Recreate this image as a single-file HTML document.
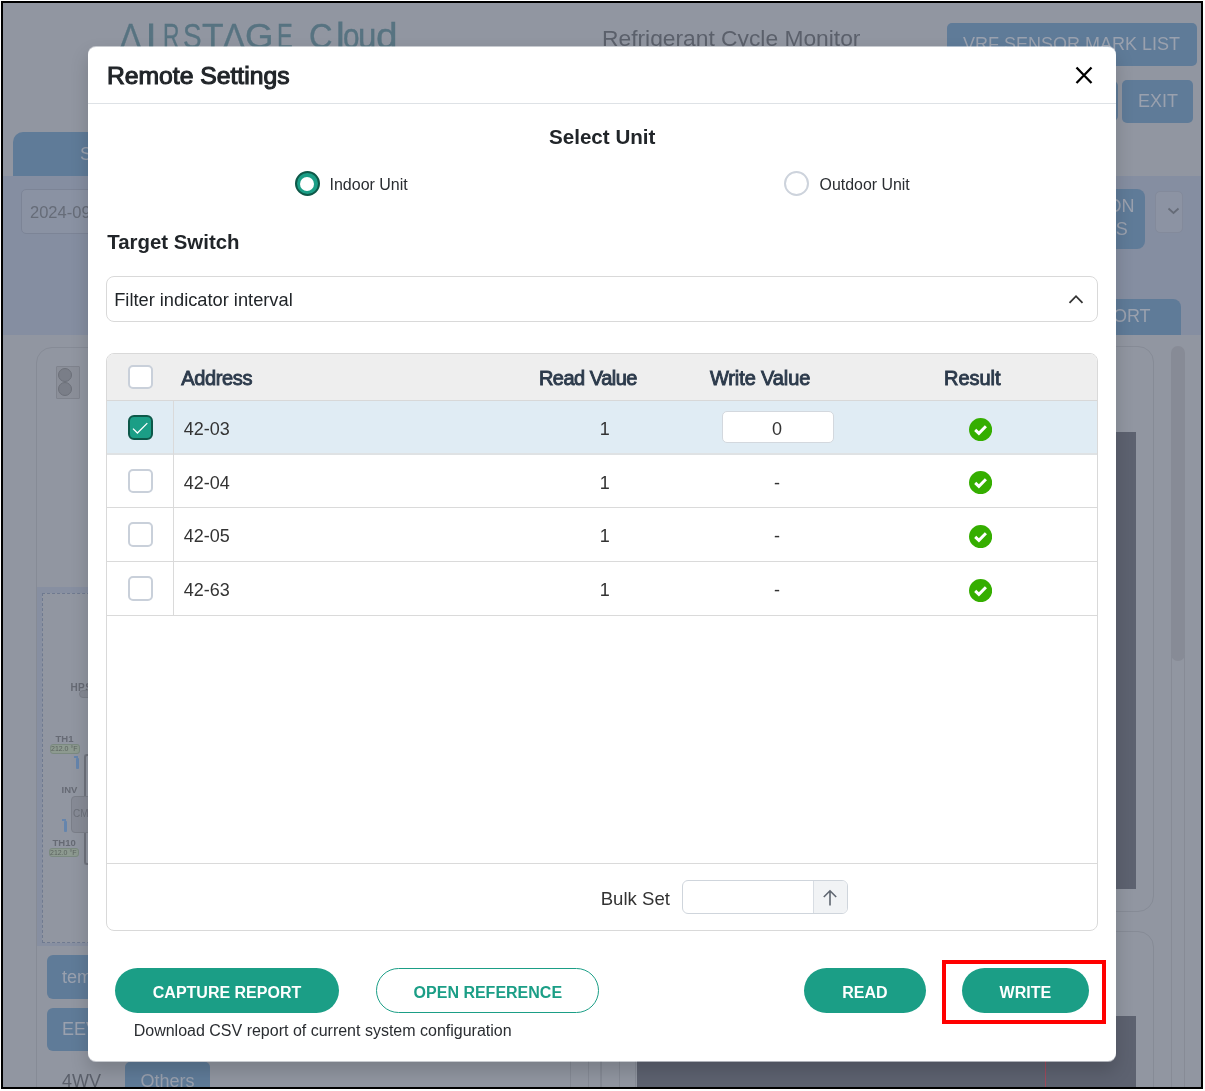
<!DOCTYPE html>
<html><head><meta charset="utf-8">
<style>
*{box-sizing:border-box;margin:0;padding:0}
html,body{width:1205px;height:1091px;overflow:hidden;background:#fff;font-family:"Liberation Sans",sans-serif}
.a{position:absolute}
.t{position:absolute;white-space:nowrap;line-height:1}
#frame{position:absolute;left:1px;top:1px;width:1202px;height:1088px;border:2px solid #000;overflow:hidden;background:#9196a1}
#pg{position:absolute;left:-3px;top:-3px;width:1205px;height:1091px;will-change:transform}
.bb{background:#5f7b98}
.lt{color:#9aa1ae}
#modal{position:absolute;left:88px;top:46px;width:1028px;height:1016px;background:rgba(255,255,255,.5);border-radius:8px;box-shadow:0 9px 18px rgba(0,0,0,.17)}
#mc{position:absolute;left:0;top:0;width:1205px;height:1091px;will-change:transform}
#mc .t{color:#212529}
</style></head>
<body>
<div id="frame"><div id="pg">
  <!-- background page (dimmed) -->
  <div class="t" style="left:119.82px;top:18.17px;font-size:35px;color:#577381;-webkit-text-stroke:0.35px #577381;transform-origin:0 0;transform:scaleX(0.913)">Λ</div>
  <div class="t" style="left:146.15px;top:18.17px;font-size:35px;color:#577381;-webkit-text-stroke:0.9px #577381;transform-origin:0 0;transform:scaleX(1.000)">I</div>
  <div class="t" style="left:163.11px;top:18.17px;font-size:35px;color:#577381;-webkit-text-stroke:0.35px #577381;transform-origin:0 0;transform:scaleX(0.652)">R</div>
  <div class="t" style="left:182.73px;top:18.17px;font-size:35px;color:#577381;-webkit-text-stroke:0.35px #577381;transform-origin:0 0;transform:scaleX(0.796)">S</div>
  <div class="t" style="left:201.89px;top:18.17px;font-size:35px;color:#577381;-webkit-text-stroke:0.35px #577381;transform-origin:0 0;transform:scaleX(1.010)">T</div>
  <div class="t" style="left:222.51px;top:18.17px;font-size:35px;color:#577381;-webkit-text-stroke:0.35px #577381;transform-origin:0 0;transform:scaleX(0.943)">Λ</div>
  <div class="t" style="left:244.71px;top:18.17px;font-size:35px;color:#577381;-webkit-text-stroke:0.35px #577381;transform-origin:0 0;transform:scaleX(1.048)">G</div>
  <div class="t" style="left:277.04px;top:18.17px;font-size:35px;color:#577381;-webkit-text-stroke:0.35px #577381;transform-origin:0 0;transform:scaleX(0.677)">E</div>
  <div class="t" style="left:309.32px;top:18.17px;font-size:35px;color:#577381;-webkit-text-stroke:0.35px #577381;transform-origin:0 0;transform:scaleX(0.932)">C</div>
  <div class="t" style="left:336.60px;top:18.17px;font-size:35px;color:#577381;-webkit-text-stroke:0.9px #577381;transform-origin:0 0;transform:scaleX(1.000)">l</div>
  <div class="t" style="left:342.73px;top:18.17px;font-size:35px;color:#577381;-webkit-text-stroke:0.35px #577381;transform-origin:0 0;transform:scaleX(0.848)">o</div>
  <div class="t" style="left:357.82px;top:18.17px;font-size:35px;color:#577381;-webkit-text-stroke:0.35px #577381;transform-origin:0 0;transform:scaleX(0.946)">u</div>
  <div class="t" style="left:376.34px;top:18.17px;font-size:35px;color:#577381;-webkit-text-stroke:0.35px #577381;transform-origin:0 0;transform:scaleX(1.108)">d</div>
  <div class="t" style="left:602px;top:27px;font-size:22.8px;color:#5b606b">Refrigerant Cycle Monitor</div>
  <div class="a bb" style="left:947px;top:23px;width:250px;height:43px;border-radius:5px"></div>
  <div class="t lt" style="left:963px;top:34.8px;font-size:18px">VRF SENSOR MARK LIST</div>
  <div class="a bb" style="left:1100px;top:81px;width:18px;height:40px;border-radius:5px"></div>
  <div class="a bb" style="left:1122px;top:80px;width:71px;height:43px;border-radius:5px"></div>
  <div class="t lt" style="left:1138px;top:91.8px;font-size:18px">EXIT</div>
  <div class="a bb" style="left:13px;top:132px;width:200px;height:44px;border-radius:10px 10px 0 0"></div>
  <div class="t lt" style="left:80px;top:145px;font-size:18px">S</div>
  <div class="a" style="left:0;top:176px;width:1205px;height:159px;background:#858ea1"></div>
  <div class="a" style="left:20.5px;top:188.5px;width:120px;height:45px;border-radius:5px;border:1px solid #7c8496;background:#8a92a3"></div>
  <div class="t" style="left:30px;top:204px;font-size:16.5px;color:#666c78">2024-09</div>
  <div class="a bb" style="left:1050px;top:189px;width:95px;height:59.5px;border-radius:8px"></div>
  <div class="t lt" style="left:1034.5px;width:100px;text-align:right;top:196.76px;font-size:18px">ON</div>
  <div class="t lt" style="left:1027.7px;width:100px;text-align:right;top:220.26px;font-size:18px">S</div>
  <div class="a" style="left:1155px;top:190.5px;width:28px;height:42px;border-radius:5px;border:1px solid #838a9b;background:#8c93a3"></div>
  <svg class="a" style="left:1167px;top:207px" width="13" height="8" viewBox="0 0 13 8"><path d="M1.5 1.5 L6.5 6 L11.5 1.5" fill="none" stroke="#656b77" stroke-width="1.7"/></svg>
  <div class="a bb" style="left:1050px;top:299px;width:131px;height:36px;border-radius:8px 8px 0 0"></div>
  <div class="t lt" style="left:1050.6px;width:100px;text-align:right;top:306.76px;font-size:18px">ORT</div>

  <!-- left panel -->
  <div class="a" style="left:36px;top:346.5px;width:600px;height:800px;border:1px solid #868b96;border-radius:16px"></div>
  <div class="a" style="left:56px;top:365.5px;width:24px;height:33px;background:#8b8f99;border-radius:1px;border:1px solid #7f838d"></div>
  <div class="a" style="left:57.5px;top:367.5px;width:14px;height:14px;border-radius:50%;background:#7a7e88;border:1px solid #6c7079"></div>
  <div class="a" style="left:57.5px;top:382px;width:14px;height:14px;border-radius:50%;background:#7a7e88;border:1px solid #6c7079"></div>
  <div class="a" style="left:37px;top:586.5px;width:560px;height:359.5px;background:#878fa1"></div>
  <div class="a" style="left:41.5px;top:593px;width:560px;height:349.5px;border:1.5px dashed #6f7a90;background:#9196a1"></div>
  <div class="t" style="left:70.5px;top:682.5px;font-size:10px;font-weight:bold;color:#666a74;letter-spacing:0.4px">HPS</div>
  <div class="a" style="left:79px;top:690px;width:20px;height:8px;border-radius:4px;background:#858994;border:1px solid #7b7f89"></div>
  <div class="t" style="left:55.5px;top:734px;font-size:9.5px;font-weight:bold;color:#666a74">TH1</div>
  <div class="a" style="left:49.5px;top:744px;width:30px;height:9.5px;border-radius:3px;background:#8d9a90;border:1px solid #7b8a80"></div>
  <div class="t" style="left:51px;top:745px;font-size:7px;color:#5c6460">212.0 °F</div>
  <div class="a" style="left:75.5px;top:758px;width:3.5px;height:11px;background:#6585ad;border-radius:1px"></div>
  <div class="a" style="left:73.5px;top:756px;width:4.5px;height:1.5px;background:#6585ad"></div>
  <div class="a" style="left:83.5px;top:753.5px;width:4px;height:111px;border:2px solid #6f737d;border-right:none;border-radius:3px 0 0 3px"></div>
  <div class="t" style="left:61.5px;top:785px;font-size:9.5px;font-weight:bold;color:#666a74">INV</div>
  <div class="a" style="left:70.5px;top:795.5px;width:40px;height:37.5px;border-radius:4px;background:#878b96;border:1px solid #7b7f89"></div>
  <div class="t" style="left:73px;top:809px;font-size:10px;color:#6c707a">CM</div>
  <div class="a" style="left:63.5px;top:821px;width:3.5px;height:11px;background:#6585ad;border-radius:1px"></div>
  <div class="a" style="left:61.5px;top:819px;width:4.5px;height:1.5px;background:#6585ad"></div>
  <div class="t" style="left:52.5px;top:837.5px;font-size:9.5px;font-weight:bold;color:#666a74">TH10</div>
  <div class="a" style="left:48.5px;top:847.5px;width:30px;height:9.5px;border-radius:3px;background:#8d9a90;border:1px solid #7b8a80"></div>
  <div class="t" style="left:50px;top:848.5px;font-size:7px;color:#5c6460">212.0 °F</div>
  <div class="a bb" style="left:47px;top:955px;width:120px;height:43.5px;border-radius:6px"></div>
  <div class="t lt" style="left:62px;top:968px;font-size:18px">tem</div>
  <div class="a bb" style="left:47px;top:1008.3px;width:120px;height:43px;border-radius:6px"></div>
  <div class="t lt" style="left:62px;top:1020px;font-size:18px">EEV</div>
  <div class="t" style="left:62px;top:1072.3px;font-size:18px;color:#5b606b">4WV</div>
  <div class="a bb" style="left:125.4px;top:1062px;width:84.5px;height:60px;border-radius:5px"></div>
  <div class="t lt" style="left:140.5px;top:1071.5px;font-size:18px">Others</div>
  <div class="a" style="left:570px;top:1000px;width:1px;height:100px;background:#858a95"></div>
  <div class="a" style="left:588px;top:1000px;width:1px;height:100px;background:#858a95"></div>
  <div class="a" style="left:601px;top:1000px;width:1px;height:100px;background:#858a95"></div>
  <div class="a" style="left:619px;top:1000px;width:1px;height:100px;background:#858a95"></div>

  <!-- right side -->
  <div class="a" style="left:600px;top:345.8px;width:553.5px;height:566.5px;border:1px solid #868b96;border-radius:16px"></div>
  <div class="a" style="left:600px;top:931.3px;width:553.5px;height:300px;border:1px solid #868b96;border-radius:16px"></div>
  <div class="a" style="left:640px;top:432.3px;width:496px;height:456.5px;background:#5d6270"></div>
  <div class="a" style="left:637px;top:1016px;width:499px;height:80px;background:#5d6270"></div>
  <div class="a" style="left:1045px;top:1040px;width:1px;height:60px;background:#a04a5c"></div>
  <div class="a" style="left:1171px;top:655px;width:1px;height:450px;background:#878b96"></div>
  <div class="a" style="left:1184px;top:655px;width:1px;height:450px;background:#878b96"></div>
  <div class="a" style="left:1171px;top:345.8px;width:14px;height:315.5px;border-radius:7px;background:#878b96"></div>
</div></div>

<!-- modal -->
<div id="modal"></div><div class="a" style="left:88px;top:47px;width:1028px;height:1014px;background:#fff;border-radius:8px"></div>
<div id="mc">
<div class="t" style="left:107px;top:64.49px;font-size:24.7px;-webkit-text-stroke:1.1px #212529">Remote Settings</div>
<div class="a" style="left:88px;top:103px;width:1028px;height:1px;background:#dee2e6"></div>
<svg class="a" style="left:1075px;top:65.5px" width="18" height="18.5" viewBox="0 0 18 18.5"><path d="M1.5 1.5 L16.5 17 M16.5 1.5 L1.5 17" stroke="#000" stroke-width="2.3" fill="none"/></svg>
<div class="t" style="left:549px;top:126.66px;font-size:20.6px;font-weight:bold">Select Unit</div>
<div class="a" style="left:294.9px;top:171.1px;width:25px;height:25px;border-radius:50%;background:#1b9e86;border:2px solid #0e5848"></div>
<div class="a" style="left:300.4px;top:176.6px;width:14px;height:14px;border-radius:50%;background:#fff"></div>
<div class="t" style="left:329.5px;top:176.66px;font-size:16px;color:#2a2d31">Indoor Unit</div>
<div class="a" style="left:783.8px;top:171.1px;width:25px;height:25px;border-radius:50%;background:#fff;border:2px solid #cdd3dc"></div>
<div class="t" style="left:819.6px;top:176.64px;font-size:15.9px;color:#2a2d31">Outdoor Unit</div>
<div class="t" style="left:107.3px;top:231.63px;font-size:20.4px;font-weight:bold">Target Switch</div>
<div class="a" style="left:106px;top:276px;width:992px;height:46px;border:1px solid #d9d9d9;border-radius:8px"></div>
<div class="t" style="left:114.2px;top:290.55px;font-size:18.25px">Filter indicator interval</div>
<svg class="a" style="left:1068px;top:294px" width="16" height="10" viewBox="0 0 16 10"><path d="M1.5 8.8 L8 2.2 L14.5 8.8" stroke="#333" stroke-width="1.8" fill="none"/></svg>
<div class="a" style="left:106px;top:353px;width:992px;height:578px;border:1px solid #d9d9d9;border-radius:8px;overflow:hidden">
<div class="a" style="left:0;top:0;width:990px;height:46px;background:#eeeeee"></div>
<div class="a" style="left:0;top:46px;width:990px;height:1px;background:#d8d8d8"></div>
<div class="a" style="left:0;top:47px;width:990px;height:52px;background:#e0ecf4"></div>
<div class="a" style="left:0;top:99px;width:990px;height:2px;background:#dfe2e4"></div>
<div class="a" style="left:0;top:153px;width:990px;height:1px;background:#dadada"></div>
<div class="a" style="left:0;top:207px;width:990px;height:1px;background:#dadada"></div>
<div class="a" style="left:0;top:261px;width:990px;height:1px;background:#dadada"></div>
<div class="a" style="left:0;top:509px;width:990px;height:1px;background:#dadada"></div>
<div class="a" style="left:66px;top:47px;width:1px;height:214px;background:#dadada"></div>
</div>
<div class="a" style="left:128.3px;top:364.7px;width:24.6px;height:24.6px;border:2px solid #c9d0da;border-radius:5px;background:#fff"></div>
<div class="a" style="left:128.3px;top:415px;width:24.6px;height:24.6px;border:2px solid #0d5849;border-radius:6px;background:#1b9e86"></div>
<svg class="a" style="left:128.3px;top:415px" width="24.5" height="24.5" viewBox="0 0 24.5 24.5"><path d="M5 13.6 L9.4 18 L19.3 8.1" stroke="#fff" stroke-width="1.3" fill="none"/></svg>
<div class="a" style="left:128.3px;top:468.5px;width:24.6px;height:24.6px;border:2px solid #c9d0da;border-radius:5px;background:#fff"></div>
<div class="a" style="left:128.3px;top:522.4px;width:24.6px;height:24.6px;border:2px solid #c9d0da;border-radius:5px;background:#fff"></div>
<div class="a" style="left:128.3px;top:576.2px;width:24.6px;height:24.6px;border:2px solid #c9d0da;border-radius:5px;background:#fff"></div>




<div class="t" style="left:181.2px;top:367.87px;font-size:20px;color:#2c3a4b;-webkit-text-stroke:0.9px #2c3a4b;letter-spacing:-0.35px">Address</div>
<div class="t" style="left:487.7px;width:200px;text-align:center;text-indent:0.5px;top:367.87px;font-size:20px;color:#2c3a4b;-webkit-text-stroke:0.9px #2c3a4b;letter-spacing:-0.5px">Read Value</div>
<div class="t" style="left:660.0px;width:200px;text-align:center;text-indent:0.12px;top:367.87px;font-size:20px;color:#2c3a4b;-webkit-text-stroke:0.9px #2c3a4b;letter-spacing:-0.12px">Write Value</div>
<div class="t" style="left:872.2px;width:200px;text-align:center;text-indent:0.05px;top:367.87px;font-size:20px;color:#2c3a4b;-webkit-text-stroke:0.9px #2c3a4b;letter-spacing:-0.05px">Result</div>
<div class="t" style="left:183.7px;top:420.06px;font-size:18px;color:#333">42-03</div>
<div class="t" style="left:554.8px;width:100px;text-align:center;top:420.06px;font-size:18px;color:#333">1</div>
<div class="t" style="left:727px;width:100px;text-align:center;top:420.06px;font-size:18px;color:#333">0</div>
<svg class="a" style="left:968.70px;top:417.60px" width="23.2" height="23.2" viewBox="0 0 23.2 23.2"><circle cx="11.6" cy="11.6" r="11.6" fill="#35ae00"/><path d="M6.2 11.8 L9.9 15.3 L16.9 8.2" stroke="#fff" stroke-width="3" fill="none"/></svg>
<div class="t" style="left:183.7px;top:473.73px;font-size:18px;color:#333">42-04</div>
<div class="t" style="left:554.8px;width:100px;text-align:center;top:473.73px;font-size:18px;color:#333">1</div>
<div class="t" style="left:727px;width:100px;text-align:center;top:473.73px;font-size:18px;color:#333">-</div>
<svg class="a" style="left:968.70px;top:471.27px" width="23.2" height="23.2" viewBox="0 0 23.2 23.2"><circle cx="11.6" cy="11.6" r="11.6" fill="#35ae00"/><path d="M6.2 11.8 L9.9 15.3 L16.9 8.2" stroke="#fff" stroke-width="3" fill="none"/></svg>
<div class="t" style="left:183.7px;top:527.40px;font-size:18px;color:#333">42-05</div>
<div class="t" style="left:554.8px;width:100px;text-align:center;top:527.40px;font-size:18px;color:#333">1</div>
<div class="t" style="left:727px;width:100px;text-align:center;top:527.40px;font-size:18px;color:#333">-</div>
<svg class="a" style="left:968.70px;top:524.94px" width="23.2" height="23.2" viewBox="0 0 23.2 23.2"><circle cx="11.6" cy="11.6" r="11.6" fill="#35ae00"/><path d="M6.2 11.8 L9.9 15.3 L16.9 8.2" stroke="#fff" stroke-width="3" fill="none"/></svg>
<div class="t" style="left:183.7px;top:581.07px;font-size:18px;color:#333">42-63</div>
<div class="t" style="left:554.8px;width:100px;text-align:center;top:581.07px;font-size:18px;color:#333">1</div>
<div class="t" style="left:727px;width:100px;text-align:center;top:581.07px;font-size:18px;color:#333">-</div>
<svg class="a" style="left:968.70px;top:578.61px" width="23.2" height="23.2" viewBox="0 0 23.2 23.2"><circle cx="11.6" cy="11.6" r="11.6" fill="#35ae00"/><path d="M6.2 11.8 L9.9 15.3 L16.9 8.2" stroke="#fff" stroke-width="3" fill="none"/></svg>
<div class="a" style="left:721.8px;top:410.8px;width:112.3px;height:32.4px;border:1px solid #d3d8de;border-radius:5px;background:#fff"></div>
<div class="t" style="left:727px;width:100px;text-align:center;top:420.06px;font-size:18px;color:#333">0</div>
<div class="t" style="left:600.7px;top:889.66px;font-size:18.6px;color:#333">Bulk Set</div>
<div class="a" style="left:682.3px;top:880px;width:165.3px;height:34px;border:1px solid #cfd5dc;border-radius:6px;background:#fff;overflow:hidden"><div class="a" style="left:129.4px;top:0;width:40px;height:40px;background:#f1f3f5;border-left:1px solid #d8dde3"></div></div>
<svg class="a" style="left:822.3px;top:888.5px" width="16" height="18" viewBox="0 0 16 18"><path d="M8 16.5 V1.8 M1.8 8 L8 1.8 L14.2 8" stroke="#5f6670" stroke-width="1.6" fill="none"/></svg>
<div class="a" style="left:115px;top:968px;width:224.0px;height:45px;border-radius:23px;background:#1b9e86"></div>
<div class="t" style="left:115px;width:224.0px;text-align:center;top:984.6px;font-size:16px;font-weight:bold;color:#fff">CAPTURE REPORT</div>
<div class="a" style="left:376.2px;top:968px;width:223.3px;height:45px;border-radius:23px;background:#fff;border:1px solid #1b9e86"></div>
<div class="t" style="left:376.2px;width:223.3px;text-align:center;top:984.6px;font-size:16px;font-weight:bold;color:#1b9e86">OPEN REFERENCE</div>
<div class="a" style="left:804.3px;top:968px;width:121.3px;height:45px;border-radius:23px;background:#1b9e86"></div>
<div class="t" style="left:804.3px;width:121.3px;text-align:center;top:984.6px;font-size:16px;font-weight:bold;color:#fff">READ</div>
<div class="a" style="left:961.8px;top:968px;width:127.2px;height:45px;border-radius:23px;background:#1b9e86"></div>
<div class="t" style="left:961.8px;width:127.2px;text-align:center;top:984.6px;font-size:16px;font-weight:bold;color:#fff">WRITE</div>
<div class="a" style="left:942px;top:960px;width:164px;height:64px;border:4px solid #ff0000"></div>
<div class="t" style="left:133.7px;top:1022.56px;font-size:16px;color:#2a2d31">Download CSV report of current system configuration</div>
</div>
</body></html>
